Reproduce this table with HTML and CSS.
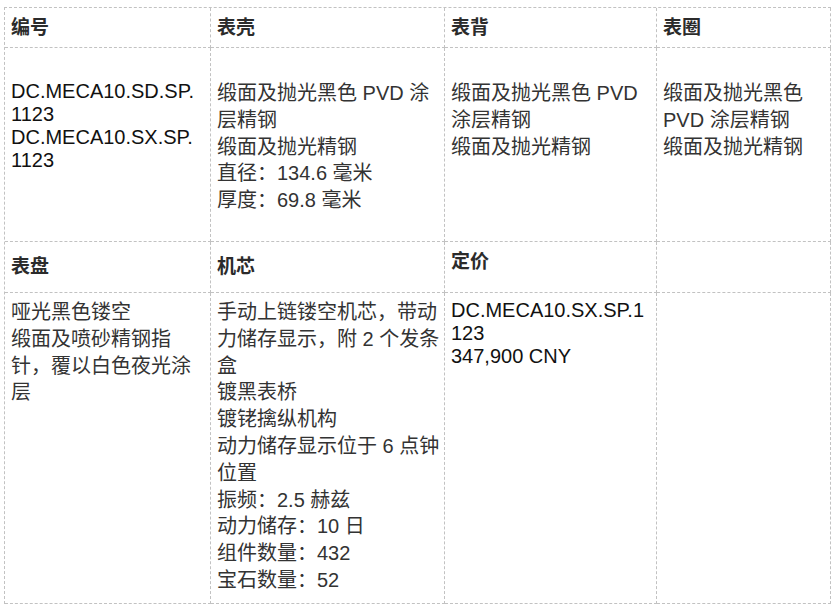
FILE: index.html
```html
<!DOCTYPE html>
<html lang="zh-CN">
<head>
<meta charset="utf-8">
<title>规格</title>
<link rel="stylesheet" href="styles.css">
</head>
<body>
<div class="spec">
  <div class="cell head head-top">编号</div>
  <div class="cell head head-top">表壳</div>
  <div class="cell head head-top">表背</div>
  <div class="cell head head-top">表圈</div>

  <div class="cell body body-top latin">DC.MECA10.SD.SP.1123<br>DC.MECA10.SX.SP.1123</div>
  <div class="cell body body-top">缎面及抛光黑色 PVD 涂层精钢<br>缎面及抛光精钢<br>直径：134.6 毫米<br>厚度：69.8 毫米</div>
  <div class="cell body body-top">缎面及抛光黑色 PVD 涂层精钢<br>缎面及抛光精钢</div>
  <div class="cell body body-top">缎面及抛光黑色 PVD 涂层精钢<br>缎面及抛光精钢</div>

  <div class="cell head head-mid">表盘</div>
  <div class="cell head head-mid">机芯</div>
  <div class="cell head head-mid head-price">定价</div>
  <div class="cell head head-mid"></div>

  <div class="cell body body-bottom">哑光黑色镂空<br>缎面及喷砂精钢指针，覆以白色夜光涂层</div>
  <div class="cell body body-bottom">手动上链镂空机芯，带动力储存显示，附 2 个发条盒<br>镀黑表桥<br>镀铑擒纵机构<br>动力储存显示位于 6 点钟位置<br>振频：2.5 赫兹<br>动力储存：10 日<br>组件数量：432<br>宝石数量：52</div>
  <div class="cell body body-bottom latin">DC.MECA10.SX.SP.1123<br>347,900 CNY</div>
  <div class="cell body body-bottom"></div>
</div>
</body>
</html>
```

FILE: styles.css
```css
html, body {
  background: #ffffff;
}

body {
  margin: 7px 0 0 4px;
  font-family: "Liberation Sans", "Noto Sans CJK SC", sans-serif;
  color: #222222;
}

.spec {
  display: grid;
  grid-template-columns: 206px 234px 212px 174px;
  width: 827px;
  box-sizing: border-box;
  border-top: 1px dashed #c2c2c2;
  border-left: 1px dashed #c2c2c2;
}

.cell {
  box-sizing: border-box;
  border-right: 1px dashed #c2c2c2;
  border-bottom: 1px dashed #c2c2c2;
  padding-left: 6px;
  padding-right: 4px;
  overflow-wrap: break-word;
  word-break: normal;
  line-break: strict;
}

.spec > .cell:nth-child(4n+1) {
  padding-right: 9px;
}

.head {
  font-size: 19px;
  font-weight: bold;
  line-height: 24px;
  color: #2b2b2b;
}

.head-top {
  padding-top: 8px;
  padding-bottom: 7px;
}

.head-mid {
  padding-top: 13px;
  padding-bottom: 13px;
}

.head-price {
  padding-top: 8px;
  padding-bottom: 18px;
}

.body {
  font-size: 20px;
  line-height: 26.8px;
  color: #333333;
}

.body.latin {
  line-height: 23px;
  color: #111111;
}

.body-top {
  padding-top: 32px;
  padding-bottom: 27px;
}

.body-bottom {
  padding-top: 6px;
  padding-bottom: 9px;
}
```
